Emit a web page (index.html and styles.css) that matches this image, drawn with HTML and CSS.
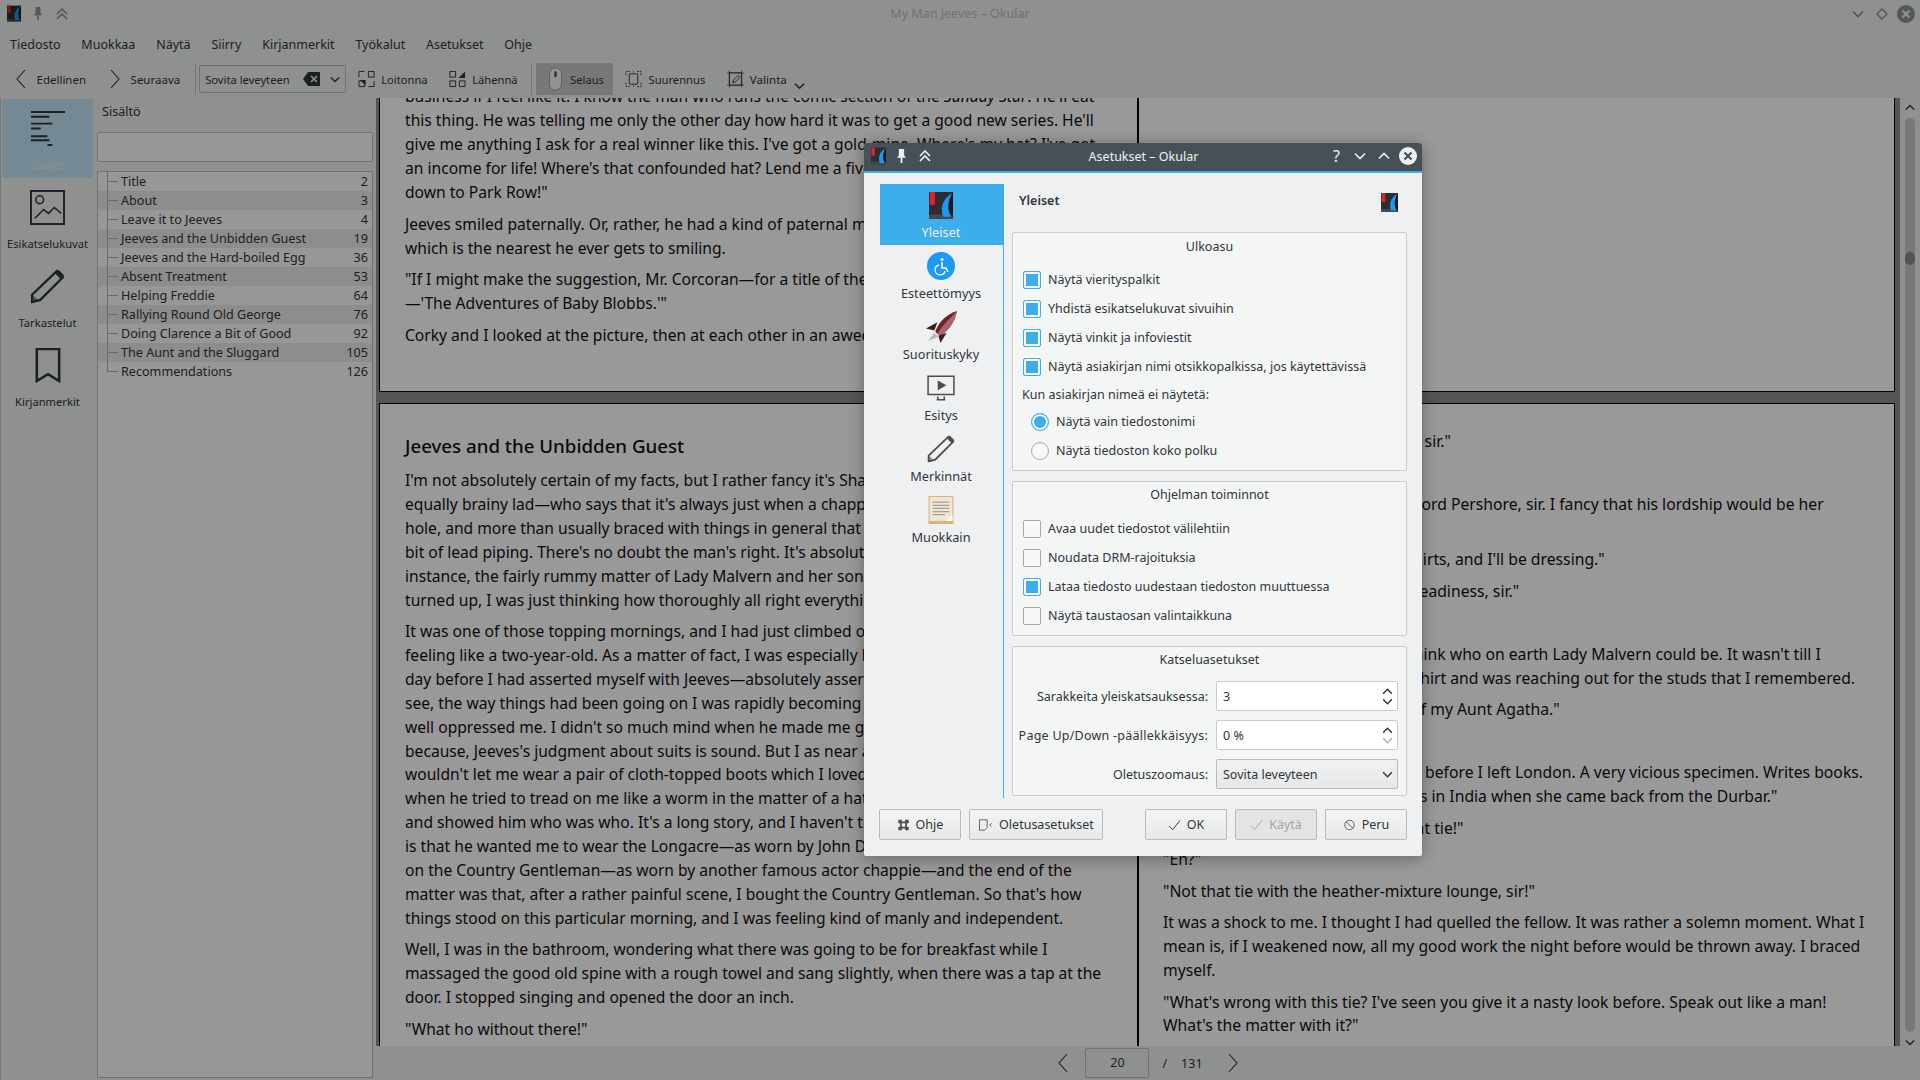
FILE: index.html
```html
<!DOCTYPE html>
<html lang="fi">
<head>
  <meta charset="UTF-8">
  <meta name="viewport" content="width=device-width, initial-scale=1.0">
  <title>Asetukset – Okular</title>
  <link rel="stylesheet" href="styles.css">
</head>
<body>
  <svg class="defs" xmlns="http://www.w3.org/2000/svg">
    <symbol id="okular" viewBox="0 0 32 36">
      <rect x="0" y="0" width="32" height="36" fill="#2b2d30"/>
      <rect x="0" y="30" width="32" height="6" fill="#45484c"/>
      <rect x="1" y="0" width="7" height="17" fill="#e3202c"/>
      <path d="M31 2C20 8 14 19 19 33h11C24 25 24 13 31 2z" fill="#1d99f3"/>
      <path d="M31 2C26 12 25 24 30 33h2V2z" fill="#17191b"/>
    </symbol>
    <symbol id="chev-left" viewBox="0 0 10 20"><path d="M9 1L1 10l8 9" fill="none" stroke="currentColor" stroke-width="1.1"/></symbol>
    <symbol id="chev-right" viewBox="0 0 10 20"><path d="M1 1l8 9-8 9" fill="none" stroke="currentColor" stroke-width="1.1"/></symbol>
    <symbol id="chev-down" viewBox="0 0 12 8"><path d="M1 1.500l5 5 5-5" fill="none" stroke="currentColor" stroke-width="1.6"/></symbol>
    <symbol id="chev-up" viewBox="0 0 12 8"><path d="M1 6.500l5-5 5 5" fill="none" stroke="currentColor" stroke-width="1.6"/></symbol>
    <symbol id="chev-double" viewBox="0 0 12 12"><path d="M1 6l5-5 5 5M1 11l5-5 5 5" fill="none" stroke="currentColor" stroke-width="1.6"/></symbol>
    <symbol id="pin" viewBox="0 0 12 16"><path d="M3 0h6v7l2 3H7v6H5v-6H1l2-3z" fill="currentColor"/></symbol>
    <symbol id="close" viewBox="0 0 18 18"><circle cx="9" cy="9" r="9" fill="currentColor"/><path d="M5.500 5.500l7 7M12.500 5.500l-7 7" stroke="var(--x)" stroke-width="2.2"/></symbol>
    <symbol id="pencil" viewBox="0 0 34 34"><path d="M26 2l6 6L10 30l-8 2 0-7z" fill="none" stroke="currentColor" stroke-width="2.2"/><path d="M25 3l3-2 5 5-2 3-1 1-6-6z" fill="currentColor"/><path d="M2 25l7 6-7 2z" fill="currentColor" opacity=".55"/></symbol>
    <symbol id="check" viewBox="0 0 14 12"><path d="M1 7l4 4 8-10" fill="none" stroke="currentColor" stroke-width="1"/></symbol>
  </svg>

  <div class="app">
    <header class="titlebar">
      <svg class="tb-logo"><use href="#okular"/></svg>
      <svg class="tb-pin"><use href="#pin"/></svg>
      <svg class="tb-up"><use href="#chev-double"/></svg>
      <div class="win-title">My Man Jeeves – Okular</div>
      <svg class="wb-down"><use href="#chev-down"/></svg>
      <svg class="wb-diamond" viewBox="0 0 12 12"><path d="M6 1l5 5-5 5-5-5z" fill="none" stroke="currentColor" stroke-width="1.5"/></svg>
      <svg class="wb-close"><use href="#close"/></svg>
    </header>

    <nav class="menubar">
      <span>Tiedosto</span><span>Muokkaa</span><span>Näytä</span><span>Siirry</span>
      <span>Kirjanmerkit</span><span>Työkalut</span><span>Asetukset</span><span>Ohje</span>
    </nav>

    <div class="toolbar">
      <div class="tool nav-tool"><svg class="ic-chev"><use href="#chev-left"/></svg>Edellinen</div>
      <div class="tool nav-tool"><svg class="ic-chev"><use href="#chev-right"/></svg>Seuraava</div>
      <div class="sep"></div>
      <div class="zoom-combo">
        <span>Sovita leveyteen</span>
        <svg class="ic-clear" viewBox="0 0 17 14"><path d="M5 0h12v14H5L0 7z" fill="#31363b"/><path d="M8 4l6 6M14 4l-6 6" stroke="#eff0f1" stroke-width="1.6"/></svg>
        <svg class="ic-down"><use href="#chev-down"/></svg>
      </div>
      <div class="tool"><svg class="ic-tool" viewBox="0 0 18 18"><path d="M11 1h6v6h-6zM1 11h6v6H1z" fill="none" stroke="#31363b"/><path d="M1 7V1h6M11 17h6v-6" fill="none" stroke="#31363b"/><path d="M8 10H2l6 6z" fill="#31363b"/></svg>Loitonna</div>
      <div class="tool"><svg class="ic-tool" viewBox="0 0 18 18"><path d="M1 1h6v6H1zM1 11h6v6H1zM11 11h6v6h-6z" fill="none" stroke="#31363b"/><path d="M10 8h7V1z" fill="#31363b"/></svg>Lähennä</div>
      <div class="sep sep-two"></div>
      <div class="tool tool-on"><svg class="ic-mouse" viewBox="0 0 16 28"><rect x="1" y="1" width="14" height="26" rx="7" fill="#f4f4f4" stroke="#999"/><rect x="6.500" y="5" width="3" height="7" rx="1.500" fill="#555"/></svg>Selaus</div>
      <div class="tool"><svg class="ic-tool" viewBox="0 0 18 18"><rect x="4.500" y="3.500" width="9" height="11" rx="1" fill="none" stroke="#31363b"/><path d="M1 5V1h4M13 1h4v4M17 13v4h-4M5 17H1v-4M9 1v1M9 16v1" fill="none" stroke="#31363b" stroke-dasharray="2 1"/></svg>Suurennus</div>
      <div class="tool tool-select"><svg class="ic-tool" viewBox="0 0 18 18"><path d="M2.500 2.500h13v13h-13z" fill="none" stroke="#31363b"/><path d="M0 2.500h18M0 15.500h18M2.500 0v18M15.500 0v18" stroke="#31363b" stroke-width=".7"/><path d="M6 13l1-3 5-5 2 2-5 5z" fill="none" stroke="#31363b"/></svg>Valinta</div>
      <svg class="ic-more"><use href="#chev-down"/></svg>
    </div>

    <main class="workspace">
      <aside class="sidebar">
        <div class="side-item side-on">
          <svg class="side-icon" viewBox="0 0 36 36" stroke="#31363b" stroke-width="2"><path d="M1 1h35M1 6h19M1 13h22M1 18h10M1 26h17M1 30h19M18 35h5"/></svg>
          <span>Sisältö</span>
        </div>
        <div class="side-item">
          <svg class="side-icon" viewBox="0 0 36 36"><rect x="1" y="1" width="34" height="34" fill="none" stroke="#31363b" stroke-width="2"/><circle cx="10" cy="10" r="4" fill="none" stroke="#31363b" stroke-width="1.6"/><path d="M5 29l9-9 5 4 6-6 7 6" fill="none" stroke="#31363b" stroke-width="1.6"/></svg>
          <span>Esikatselukuvat</span>
        </div>
        <div class="side-item">
          <svg class="side-icon"><use href="#pencil"/></svg>
          <span>Tarkastelut</span>
        </div>
        <div class="side-item">
          <svg class="side-icon" viewBox="0 0 36 36"><path d="M7 1h23v33L18.500 27 7 34z" fill="none" stroke="#31363b" stroke-width="2.600"/></svg>
          <span>Kirjanmerkit</span>
        </div>
      </aside>

      <section class="panel">
        <div class="panel-title">Sisältö</div>
        <div class="search"></div>
        <ul class="toc">
          <li><i></i><span>Title</span><b>2</b></li>
          <li><i></i><span>About</span><b>3</b></li>
          <li><i></i><span>Leave it to Jeeves</span><b>4</b></li>
          <li><i></i><span>Jeeves and the Unbidden Guest</span><b>19</b></li>
          <li><i></i><span>Jeeves and the Hard-boiled Egg</span><b>36</b></li>
          <li><i></i><span>Absent Treatment</span><b>53</b></li>
          <li><i></i><span>Helping Freddie</span><b>64</b></li>
          <li><i></i><span>Rallying Round Old George</span><b>76</b></li>
          <li><i></i><span>Doing Clarence a Bit of Good</span><b>92</b></li>
          <li><i></i><span>The Aunt and the Sluggard</span><b>105</b></li>
          <li class="toc-last"><i></i><span>Recommendations</span><b>126</b></li>
        </ul>
      </section>

      <div class="doc-area">
        <div class="doc-row">
          <section class="viewer">
            <div class="spread spread-top">
              <article class="page">
                <div class="page-clip">
                  <p>business if I feel like it. I know the man who runs the comic section of the <em>Sunday Star</em>. He'll eat<br>
                  this thing. He was telling me only the other day how hard it was to get a good new series. He'll<br>
                  give me anything I ask for a real winner like this. I've got a gold-mine. Where's my hat? I've got<br>
                  an income for life! Where's that confounded hat? Lend me a five, Bertie. I'm going to jump in a<br>
                  down to Park Row!"</p>
                  <p>Jeeves smiled paternally. Or, rather, he had a kind of paternal muscular spasm about the mouth,<br>
                  which is the nearest he ever gets to smiling.</p>
                  <p>"If I might make the suggestion, Mr. Corcoran—for a title of the picture—<br>
                  —'The Adventures of Baby Blobbs.'"</p>
                  <p>Corky and I looked at the picture, then at each other in an awed way.</p>
                </div>
              </article>
              <article class="page"></article>
            </div>

            <div class="spread spread-main">
              <article class="page">
                <h2>Jeeves and the Unbidden Guest</h2>
                <p>I'm not absolutely certain of my facts, but I rather fancy it's Shakespeare—or, if not, it's some<br>
                equally brainy lad—who says that it's always just when a chappie is feeling particularly top-<br>
                hole, and more than usually braced with things in general that Fate sneaks up behind him with a<br>
                bit of lead piping. There's no doubt the man's right. It's absolutely that way with me. Take, for<br>
                instance, the fairly rummy matter of Lady Malvern and her son Wilmot. A moment before they<br>
                turned up, I was just thinking how thoroughly all right everything was.</p>
                <p>It was one of those topping mornings, and I had just climbed out of the cold shower,<br>
                feeling like a two-year-old. As a matter of fact, I was especially bucked just then because the<br>
                day before I had asserted myself with Jeeves—absolutely asserted myself, don't you know. You<br>
                see, the way things had been going on I was rapidly becoming a dashed serf. The man had jolly<br>
                well oppressed me. I didn't so much mind when he made me give up one of my new suits,<br>
                because, Jeeves's judgment about suits is sound. But I as near as a toucher rebelled when he<br>
                wouldn't let me wear a pair of cloth-topped boots which I loved like a couple of brothers. And<br>
                when he tried to tread on me like a worm in the matter of a hat, I put my foot down<br>
                and showed him who was who. It's a long story, and I haven't time to tell you now, but the point<br>
                is that he wanted me to wear the Longacre—as worn by John Drew—when I had set my heart<br>
                on the Country Gentleman—as worn by another famous actor chappie—and the end of the<br>
                matter was that, after a rather painful scene, I bought the Country Gentleman. So that's how<br>
                things stood on this particular morning, and I was feeling kind of manly and independent.</p>
                <p>Well, I was in the bathroom, wondering what there was going to be for breakfast while I<br>
                massaged the good old spine with a rough towel and sang slightly, when there was a tap at the<br>
                door. I stopped singing and opened the door an inch.</p>
                <p>"What ho without there!"</p>
              </article>
              <article class="page page-right">
                <p>"Lady Malvern is asking to see you, sir."</p>
                <p>"Lady who?"</p>
                <p>"Lady Malvern has taken with her Lord Pershore, sir. I fancy that his lordship would be her<br>
                ladyship's son."</p>
                <p>"Tell them I am choosing out my shirts, and I'll be dressing."</p>
                <p>"Your blue suit lies laid out and in readiness, sir."</p>
                <p>"Thanks."</p>
                <p>I sat down at the side of a bed to think who on earth Lady Malvern could be. It wasn't till I<br>
                had climbed into a fresh and new shirt and was reaching out for the studs that I remembered.</p>
                <p>"Jeeves, she's an old and dear pal of my Aunt Agatha."</p>
                <p>"Yes, sir?"</p>
                <p>"She was the friend of my aunt just before I left London. A very vicious specimen. Writes books.<br>
                The last was about social conditions in India when she came back from the Durbar."</p>
                <p>"Very well, then. I will now wear that tie!"</p>
                <p>"Eh?"</p>
                <p>"Not that tie with the heather-mixture lounge, sir!"</p>
                <p>It was a shock to me. I thought I had quelled the fellow. It was rather a solemn moment. What I<br>
                mean is, if I weakened now, all my good work the night before would be thrown away. I braced<br>
                myself.</p>
                <p>"What's wrong with this tie? I've seen you give it a nasty look before. Speak out like a man!<br>
                What's the matter with it?"</p>
              </article>
            </div>
          </section>

          <div class="scrollbar">
            <svg class="sb-arrow"><use href="#chev-up"/></svg>
            <div class="sb-track"><div class="sb-handle"></div></div>
            <svg class="sb-arrow"><use href="#chev-down"/></svg>
          </div>
        </div>

        <footer class="pagebar">
          <svg class="pb-chev"><use href="#chev-left"/></svg>
          <div class="pb-input">20</div>
          <span class="pb-slash">/</span>
          <span class="pb-total">131</span>
          <svg class="pb-chev"><use href="#chev-right"/></svg>
        </footer>
      </div>
    </main>

    <div class="dim"></div>

    <div class="dialog">
      <div class="dlg-title">
        <svg class="dt-logo"><use href="#okular"/></svg>
        <svg class="dt-pin"><use href="#pin"/></svg>
        <svg class="dt-up"><use href="#chev-double"/></svg>
        <div class="dt-text">Asetukset – Okular</div>
        <span class="dt-help">?</span>
        <svg class="dt-btn dt-btn-first"><use href="#chev-down"/></svg>
        <svg class="dt-btn"><use href="#chev-up"/></svg>
        <svg class="dt-close"><use href="#close"/></svg>
      </div>

      <div class="dlg-body">
        <div class="cat-list">
          <div class="cat cat-on"><svg class="cat-book"><use href="#okular"/></svg><span>Yleiset</span></div>
          <div class="cat">
            <svg class="cat-icon" viewBox="0 0 28 28"><circle cx="14" cy="14" r="14" fill="#1d99f3"/><circle cx="15" cy="7.500" r="1.600" fill="#fff"/><path d="M15 10v6h4l2 4" fill="none" stroke="#fff" stroke-width="1.500"/><path d="M12 13a5 5 0 1 0 6 6" fill="none" stroke="#fff" stroke-width="1.300"/></svg>
            <span>Esteettömyys</span>
          </div>
          <div class="cat">
            <svg class="cat-icon cat-rocket" viewBox="0 0 32 32"><path d="M31 0C22 3 13 10 10 20l4 4C23 20 29 10 31 0z" fill="#6e2126"/><path d="M31 0C25 6 17 14 12 22l2 2C23 20 29 10 31 0z" fill="#a9646a"/><path d="M12 11L1 17l8 2z" fill="#3a1b1e"/><path d="M21 21l-6 10-2-7z" fill="#3a1b1e"/><path d="M9 21l-6 8 10-4z" fill="#b7bbc0"/></svg>
            <span>Suorituskyky</span>
          </div>
          <div class="cat">
            <svg class="cat-icon" viewBox="0 0 26 24"><path d="M1 1h24v17H1z" fill="none" stroke="#4d4d4d" stroke-width="1.400"/><path d="M10 5l8 4.500-8 4.500z" fill="#4d4d4d"/><path d="M9 23h8M10 20v3M16 20v3" stroke="#4d4d4d" stroke-width="1.400"/></svg>
            <span>Esitys</span>
          </div>
          <div class="cat"><svg class="cat-icon"><use href="#pencil"/></svg><span>Merkinnät</span></div>
          <div class="cat">
            <svg class="cat-icon" viewBox="0 0 24 27"><rect width="24" height="27" fill="#d9b27c"/><rect x="1" y="1" width="22" height="23" fill="#efe6d4"/><path d="M4 6h16M4 9h16M4 12h16M4 15h16M4 18h12" stroke="#a9a091" stroke-width="1.200"/><path d="M16 24l7-6v6z" fill="#fff"/></svg>
            <span>Muokkain</span>
          </div>
        </div>

        <div class="settings">
          <div class="settings-head"><h3>Yleiset</h3><svg class="head-logo"><use href="#okular"/></svg></div>

          <fieldset class="group group-look">
            <div class="group-title">Ulkoasu</div>
            <label class="row"><span class="box on"></span>Näytä vierityspalkit</label>
            <label class="row"><span class="box on"></span>Yhdistä esikatselukuvat sivuihin</label>
            <label class="row"><span class="box on"></span>Näytä vinkit ja infoviestit</label>
            <label class="row"><span class="box on"></span>Näytä asiakirjan nimi otsikkopalkissa, jos käytettävissä</label>
            <div class="row-note">Kun asiakirjan nimeä ei näytetä:</div>
            <label class="row row-radio"><span class="radio on"></span>Näytä vain tiedostonimi</label>
            <label class="row row-radio"><span class="radio"></span>Näytä tiedoston koko polku</label>
          </fieldset>

          <fieldset class="group group-prog">
            <div class="group-title">Ohjelman toiminnot</div>
            <label class="row"><span class="box"></span>Avaa uudet tiedostot välilehtiin</label>
            <label class="row"><span class="box"></span>Noudata DRM-rajoituksia</label>
            <label class="row"><span class="box on"></span>Lataa tiedosto uudestaan tiedoston muuttuessa</label>
            <label class="row"><span class="box"></span>Näytä taustaosan valintaikkuna</label>
          </fieldset>

          <fieldset class="group group-view">
            <div class="group-title">Katseluasetukset</div>
            <div class="form">
              <span>Sarakkeita yleiskatsauksessa:</span>
              <div class="spin">3<div class="spin-arrows"><svg><use href="#chev-up"/></svg><svg><use href="#chev-down"/></svg></div></div>
              <span class="label-wide">Page Up/Down -päällekkäisyys:</span>
              <div class="spin">0 %<div class="spin-arrows"><svg><use href="#chev-up"/></svg><svg class="off"><use href="#chev-down"/></svg></div></div>
              <span>Oletuszoomaus:</span>
              <div class="combo">Sovita leveyteen<svg><use href="#chev-down"/></svg></div>
            </div>
          </fieldset>
        </div>
      </div>

      <div class="dlg-buttons">
        <button class="btn btn-help"><svg viewBox="0 0 14 14"><path d="M1 1h4v2h4V1h4v4h-2v4h2v4H9v-2H5v2H1V9h2V5H1z" fill="#4d4d4d"/><rect x="5" y="5" width="4" height="4" fill="#eff0f1"/></svg>Ohje</button>
        <button class="btn btn-defaults"><svg viewBox="0 0 16 14"><path d="M1 1h9v9l-3 3H1z" fill="none" stroke="#4d4d4d"/><path d="M15 5l-2 2 2 2" fill="none" stroke="#4d4d4d"/></svg>Oletusasetukset</button>
        <button class="btn"><svg><use href="#check"/></svg>OK</button>
        <button class="btn btn-off"><svg><use href="#check"/></svg>Käytä</button>
        <button class="btn"><svg viewBox="0 0 14 14"><circle cx="7" cy="7" r="5.500" fill="none" stroke="#4d4d4d"/><path d="M3 3l8 8" stroke="#4d4d4d"/></svg>Peru</button>
      </div>
    </div>
  </div>
</body>
</html>
```

FILE: styles.css
```css
* {
  box-sizing: border-box;
}
body {
  margin: 0;
  font-family: "Noto Sans", sans-serif;
  font-size: 12.500px;
  color: #31363b;
}
.defs {
  display: none;
}
.app {
  position: relative;
  display: flex;
  flex-direction: column;
  width: 1920px;
  height: 1080px;
  overflow: hidden;
  background: #eff0f1;
}
.dim {
  position: absolute;
  inset: 0;
  background: rgba(0, 0, 0, .4);
}

/* main window title */
.titlebar {
  display: flex;
  align-items: center;
  flex: none;
  height: 27px;
  padding: 0 5px 0 0;
  color: #8d9194;
}
.tb-logo {
  width: 14px;
  height: 17px;
  margin-left: 7px;
}
.tb-pin {
  width: 10px;
  height: 13px;
  margin-left: 12px;
}
.tb-up {
  width: 12px;
  height: 12px;
  margin-left: 13px;
}
.win-title {
  flex: 1;
  text-align: center;
  color: #bdbfc1;
}
.wb-down {
  width: 12px;
  height: 8px;
}
.wb-diamond {
  width: 12px;
  height: 12px;
  margin-left: 12px;
}
.wb-close {
  --x: #eff0f1;
  width: 18px;
  height: 18px;
  margin-left: 9px;
}

.menubar {
  display: flex;
  flex: none;
  align-items: center;
  height: 35px;
}
.menubar span {
  padding: 0 10.800px 0 10px;
}

.toolbar {
  display: flex;
  align-items: center;
  flex: none;
  height: 36px;
  padding: 0 0 2px 4px;
  font-size: 11.200px;
}
.tool {
  display: flex;
  align-items: center;
  height: 32px;
  padding: 0 9.500px 0 12px;
}
.nav-tool {
  padding: 0 12px;
  font-size: 11.500px;
}
.tool-on {
  background: #c8c8c8;
}
.tool-select {
  font-size: 11.600px;
}
.ic-chev {
  width: 10px;
  height: 20px;
  margin-right: 10.500px;
}
.ic-tool {
  width: 17px;
  height: 18px;
  margin-right: 6px;
}
.ic-mouse {
  width: 15px;
  height: 24px;
  margin-right: 7px;
}
.ic-more {
  width: 11px;
  height: 8px;
  margin: 14px 0 0 -2px;
}
.sep {
  width: 1px;
  height: 32px;
  margin: 0 3px;
  background: #c3c5c7;
}
.sep-two {
  margin: 0 4px;
}
.zoom-combo {
  display: flex;
  align-items: center;
  width: 147px;
  height: 28px;
  padding: 0 5px 0 5px;
  border: 1px solid #bcbec0;
  border-radius: 2px;
}
.zoom-combo span {
  flex: 1;
}
.ic-clear {
  width: 17px;
  height: 14px;
}
.ic-down {
  width: 10px;
  height: 7px;
  margin-left: 10px;
}

/* workspace */
.workspace {
  display: flex;
  flex: 1;
  min-height: 0;
}
.sidebar {
  flex: none;
  width: 95px;
  padding: 1px 2px 0 1px;
  border-left: 1px solid #c3c5c7;
  text-align: center;
  font-size: 11.200px;
}
.side-item {
  display: flex;
  flex-direction: column;
  align-items: center;
  height: 79px;
  padding-top: 12px;
}
.side-item span {
  margin-top: 11px;
}
.side-icon {
  width: 35px;
  height: 35px;
}
.side-on {
  background: #c2e4f7;
  color: #eff0f1;
}
.panel {
  display: flex;
  flex-direction: column;
  flex: none;
  width: 281px;
  padding: 0 3px 2px 2px;
  font-size: 12.600px;
}
.panel-title {
  height: 34px;
  padding: 5px 0 0 5px;
  line-height: 18px;
}
.search {
  flex: none;
  height: 30px;
  border: 1px solid #bcbec0;
  border-radius: 2px;
  background: #fcfcfc;
}
.toc {
  flex: 1;
  margin: 9px 0 0;
  padding: 0;
  list-style: none;
  border: 1px solid #bcbec0;
  background: #fcfcfc;
}
.toc li {
  display: flex;
  height: 19px;
  line-height: 19px;
  padding-right: 4px;
}
.toc li:nth-child(even) {
  background: #ebebeb;
}
.toc i {
  flex: none;
  width: 11px;
  margin: 0 3px 0 9px;
  border-left: 1px solid #b0b2b4;
  background: linear-gradient(#b0b2b4, #b0b2b4) no-repeat 0 50% / 100% 1px;
}
.toc .toc-last i {
  height: 10px;
  background-position: 0 100%;
}
.toc span {
  flex: 1;
}
.toc b {
  font-weight: 400;
}

/* document pages */
.doc-area {
  display: flex;
  flex-direction: column;
  flex: 1;
  min-width: 0;
}
.doc-row {
  display: flex;
  flex: 1;
  min-height: 0;
}
.viewer {
  flex: 1;
  padding: 0 5px 0 3px;
  background: #8e8e8e;
  overflow: hidden;
}
.spread {
  display: grid;
  grid-template-columns: 759px 757px;
}
.spread-top {
  height: 294px;
}
.spread-main {
  height: 643px;
  margin-top: 11px;
}
.page {
  padding: 0 0 0 25px;
  border: 1px solid #000;
  background: #fff;
  color: #111;
  font-size: 15.620px;
  line-height: 23.900px;
  white-space: nowrap;
  overflow: hidden;
}
.spread-top .page {
  border-top: 0;
  line-height: 24px;
}
.spread-top .page p {
  margin-bottom: 7.500px;
}
.spread-main .page {
  border-bottom: 0;
}
.page-clip {
  margin-top: -14px;
}
.page p {
  margin: 0 0 7.600px;
}
.page h2 {
  margin: 28px 0 9px;
  font-size: 18.700px;
  font-weight: 500;
  line-height: 28px;
}
.spread-main .page-right {
  padding-top: 26px;
  padding-left: 24px;
  font-size: 15.720px;
}

.scrollbar {
  display: flex;
  flex-direction: column;
  align-items: center;
  flex: none;
  width: 20px;
  padding-top: 6px;
}
.sb-arrow {
  width: 10px;
  height: 7px;
  flex: none;
}
.sb-track {
  flex: 1;
  width: 10px;
  margin: 7px 0;
  border-radius: 5px;
  background: #c8c9ca;
}
.sb-handle {
  width: 10px;
  height: 13px;
  margin-top: 134px;
  border-radius: 5px;
  background: #8a8c8e;
}

.pagebar {
  display: flex;
  align-items: center;
  justify-content: center;
  flex: none;
  height: 34px;
}
.pb-chev {
  width: 10px;
  height: 20px;
}
.pb-input {
  width: 64px;
  height: 30px;
  margin: 0 13px 0 17px;
  line-height: 28px;
  text-align: center;
  border: 1px solid #bcbec0;
  border-radius: 2px;
}
.pb-total {
  margin: 0 25px 0 14px;
}

/* settings dialog */
.dialog {
  position: absolute;
  left: 864px;
  top: 143px;
  display: flex;
  flex-direction: column;
  width: 558px;
  height: 713px;
  background: #eff0f1;
  border-radius: 3px 3px 2px 2px;
  box-shadow: 0 2px 16px rgba(0, 0, 0, .35);
}
.dlg-title {
  display: flex;
  align-items: center;
  flex: none;
  height: 30px;
  padding: 0 5px 2px 7px;
  border-bottom: 2px solid #3daee9;
  border-radius: 3px 3px 0 0;
  background: #475057;
  color: #eff0f1;
}
.dt-logo {
  width: 15px;
  height: 18px;
}
.dt-pin {
  width: 11px;
  height: 14px;
  margin-left: 10px;
}
.dt-up {
  width: 12px;
  height: 12px;
  margin-left: 12px;
}
.dt-text {
  flex: 1;
  padding-left: 23px;
  text-align: center;
}
.dt-help {
  font-size: 16px;
  line-height: 18px;
}
.dt-btn {
  width: 12px;
  height: 8px;
  margin-left: 12px;
}
.dt-btn-first {
  margin-left: 14px;
}
.dt-close {
  --x: #475057;
  width: 18px;
  height: 18px;
  margin-left: 9px;
}
.dlg-body {
  display: flex;
  flex: none;
  height: 636px;
  padding: 11px 15px 0 16px;
}
.cat-list {
  flex: none;
  width: 124px;
  height: 614px;
  padding-right: 1px;
  border-right: 1px solid #3daee9;
  font-size: 12.750px;
}
.cat {
  display: flex;
  flex-direction: column;
  align-items: center;
  height: 61px;
  padding-top: 5px;
  color: #31363b;
}
.cat span {
  margin-top: auto;
  padding-bottom: 4px;
  line-height: 18px;
}
.cat-on {
  margin-right: -2px;
  padding-top: 8px;
  padding-right: 2px;
  background: #3daee9;
  color: #eff0f1;
}
.cat-book {
  width: 24px;
  height: 27px;
}
.cat-icon {
  width: 28px;
  height: 28px;
  margin-top: 2px;
  color: #4d4d4d;
}
.cat-rocket {
  width: 33px;
  height: 33px;
  margin-top: 0;
}
.settings {
  flex: 1;
  margin-left: 8px;
}
.settings-head {
  display: flex;
  justify-content: space-between;
  height: 48px;
  padding: 8px 9px 0 7px;
}
.settings-head h3 {
  margin: 0;
  font-size: 12.500px;
  font-weight: 600;
  line-height: 18px;
}
.head-logo {
  width: 17px;
  height: 19px;
  margin-top: 1px;
}
.group {
  margin: 0 0 10px;
  padding: 0;
  border: 1px solid #c9cbcd;
  border-radius: 2px;
  background: #f4f5f5;
}
.group-look {
  height: 239px;
}
.group-prog {
  height: 155px;
}
.group-view {
  height: 150px;
}
.group-title {
  height: 32px;
  padding-top: 4px;
  line-height: 18px;
  text-align: center;
}
.group-look .group-title {
  padding-top: 5px;
}
.row {
  display: flex;
  align-items: center;
  height: 29px;
  padding-left: 10px;
}
.row-radio {
  padding-left: 18px;
}
.row-note {
  height: 26px;
  padding-left: 9px;
  padding-top: 2px;
  line-height: 24px;
}
.box,
.radio {
  flex: none;
  width: 18px;
  height: 18px;
  margin-right: 7px;
  border: 1px solid #a6a8aa;
  background: #f7f8f8;
}
.box {
  border-radius: 2px;
}
.box.on {
  border-color: #3daee9;
  box-shadow: inset 0 0 0 2px #f7f8f8;
  background: #3daee9;
}
.radio {
  border-radius: 50%;
}
.radio.on {
  border-color: #3daee9;
  box-shadow: inset 0 0 0 2px #f7f8f8;
  background: #3daee9;
}
.form {
  display: grid;
  grid-template-columns: 195px 182px;
  grid-auto-rows: 30px;
  gap: 9px 8px;
  align-items: center;
  margin-top: 2px;
  justify-content: end;
  padding-right: 8px;
}
.form > span {
  text-align: right;
  white-space: nowrap;
}
.form > .label-wide {
  letter-spacing: .25px;
}
.spin,
.combo {
  display: flex;
  align-items: center;
  justify-content: space-between;
  height: 30px;
  padding: 0 4px 0 6px;
  border: 1px solid #c9cbcd;
  border-radius: 2px;
  background: #fff;
}
.spin-arrows {
  display: flex;
  flex-direction: column;
  gap: 3px;
}
.spin-arrows svg {
  display: block;
  width: 11px;
  height: 7px;
}
.spin-arrows .off {
  opacity: .4;
}
.combo {
  background: linear-gradient(#f1f2f2, #e5e6e7);
  border-color: #b8babc;
}
.combo svg {
  width: 11px;
  height: 7px;
}
.dlg-buttons {
  display: flex;
  gap: 8px;
  padding: 0 15px;
}
.btn {
  display: flex;
  align-items: center;
  justify-content: center;
  gap: 6px;
  width: 82px;
  height: 31px;
  padding: 0;
  border: 1px solid #b8babc;
  border-radius: 2px;
  background: linear-gradient(#f3f4f4, #e7e8e9);
  font: inherit;
  color: inherit;
}
.btn svg {
  width: 13px;
  height: 12px;
}
.btn-defaults {
  width: 134px;
  margin-right: 34px;
}
.btn-defaults svg {
  width: 15px;
}
.btn-off {
  background: #e3e4e5;
  color: #a3a5a7;
}
```
